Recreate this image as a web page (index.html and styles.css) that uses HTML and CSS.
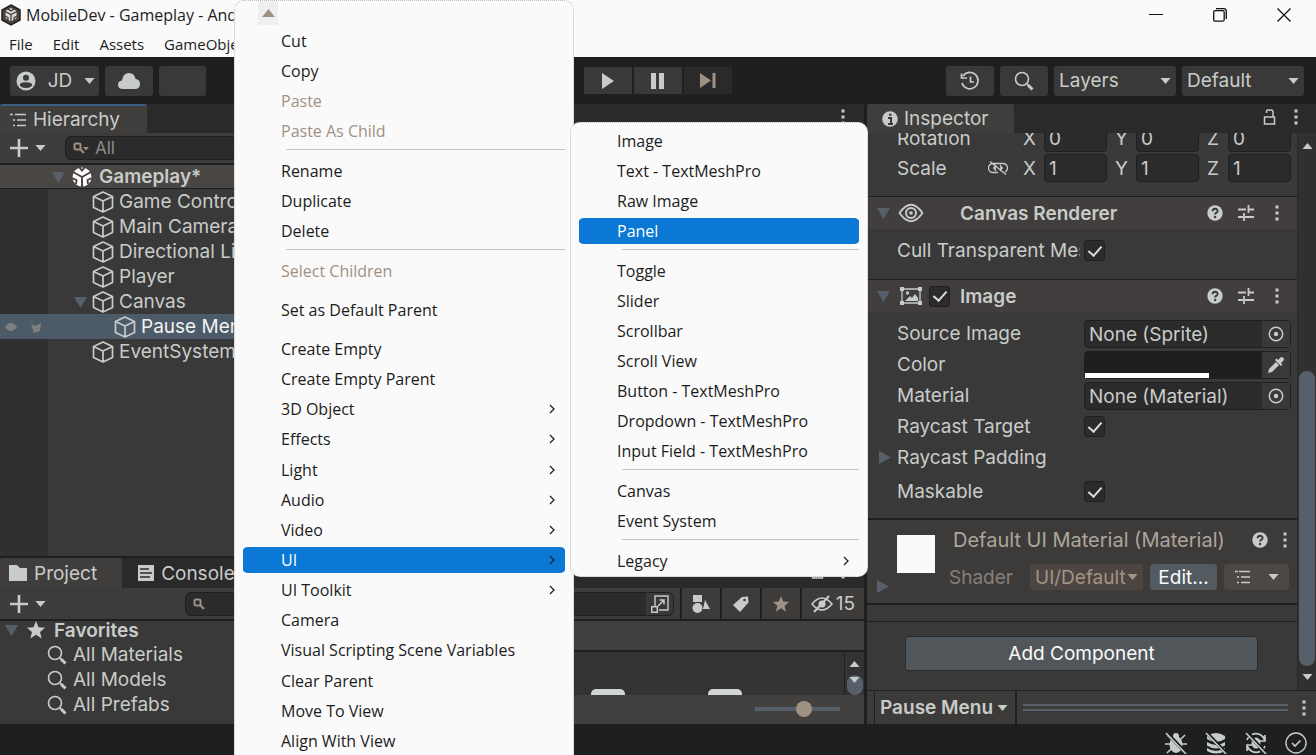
FILE: index.html
```html
<!DOCTYPE html>
<html lang="en">
<head>
<meta charset="utf-8">
<title>MobileDev - Gameplay</title>
<link rel="stylesheet" href="styles.css">
</head>
<body>
<svg class="sprite" aria-hidden="true">
  <symbol id="down" viewBox="0 0 10 6"><path d="M0 0h10L5 6z" fill="currentColor"/></symbol>
  <symbol id="up" viewBox="0 0 10 6"><path d="M0 6h10L5 0z" fill="currentColor"/></symbol>
  <symbol id="fold" viewBox="0 0 13 12"><path d="M0 1h13L6.500 12z" fill="#57606a"/></symbol>
  <symbol id="foldr" viewBox="0 0 12 13"><path d="M0 0l12 6.500L0 13z" fill="#57606a"/></symbol>
  <symbol id="chev" viewBox="0 0 8 10"><path d="M2 1l4 4-4 4" fill="none" stroke="#222" stroke-width="1.300"/></symbol>
  <symbol id="plus" viewBox="0 0 20 20"><path d="M10 1v18M1 10h18" stroke="currentColor" stroke-width="2.600" fill="none"/></symbol>
  <symbol id="dots" viewBox="0 0 4 16"><path d="M0.500 0.500h3v3h-3zM0.500 6.500h3v3h-3zM0.500 12.500h3v3h-3z" fill="currentColor"/></symbol>
  <symbol id="cube" viewBox="0 0 22 22"><path d="M11 1l9.500 4.500v11L11 21l-9.500-4.500v-11zM1.500 5.500L11 10l9.500-4.500M11 10v11" fill="none" stroke="currentColor" stroke-width="1.700" stroke-linejoin="round"/></symbol>
  <symbol id="mag" viewBox="0 0 20 20"><circle cx="8" cy="8" r="6.500" fill="none" stroke="currentColor" stroke-width="1.600"/><path d="M13 13l1.500 1.500" stroke="currentColor" stroke-width="1.600"/><path d="M14 14l4.500 4.500" stroke="currentColor" stroke-width="3"/></symbol>
  <symbol id="magsm" viewBox="0 0 16 12"><rect x="1.500" y="1.500" width="6" height="6" rx="1.500" fill="none" stroke="currentColor" stroke-width="2"/><path d="M7 7l4 4" stroke="currentColor" stroke-width="2.200"/></symbol>
  <symbol id="help" viewBox="0 0 16 16"><circle cx="8" cy="8" r="7.700" fill="currentColor"/><path d="M5.600 6.200c0-3.300 5-3.200 5-.3 0 1.800-2.500 1.700-2.500 3.700" fill="none" stroke="#393939" stroke-width="1.900"/><circle cx="8.100" cy="12" r="1.200" fill="#393939"/></symbol>
  <symbol id="preset" viewBox="0 0 16 16"><path d="M0 4.500h8M10 4.500h6M10.500 0v8M0 12h5M7 12h9M6 8v8" fill="none" stroke="currentColor" stroke-width="1.800"/></symbol>
  <symbol id="lock" viewBox="0 0 12 16"><path d="M1 8h10v7H1zM3 4V2.500Q3 1 4.500 1h3Q9.500 1 9.500 3v5" fill="none" stroke="currentColor" stroke-width="1.500"/></symbol>
  <symbol id="target" viewBox="0 0 16 16"><circle cx="8" cy="8" r="6.700" fill="none" stroke="currentColor" stroke-width="1.500"/><circle cx="8" cy="8" r="2.200" fill="currentColor"/></symbol>
  <symbol id="star" viewBox="0 0 20 20"><path d="M10 1l2.500 6.300 6.500.4-5 4.200 1.700 6.600L10 14.800l-5.700 3.700L6 11.900 1 7.700l6.500-.4z" fill="currentColor"/></symbol>
  <symbol id="list" viewBox="0 0 16 14"><path d="M1 1.500h3M5 1.500h11M3 7h2M7 7h9M3 12.500h2M7 12.500h9" stroke="currentColor" stroke-width="1.600"/></symbol>
</svg>

<div class="app">
  <header class="title">
    <svg class="logo" viewBox="0 0 20 22"><path d="M10 1l9 5v10l-9 5-9-5V6z" fill="#4a423c" stroke="#222" stroke-width="1.500"/><path d="M10 4l5.500 3v7L10 17.500 4.500 14V7z" fill="#ddd"/><path d="M10 10.500V18M10 10.500L4 7.500M10 10.500l6-3M7 5l3 2 3-2M4 12l3 1.500V16M16 12l-3 1.500V16" stroke="#38322e" stroke-width="1.200" fill="none"/></svg>
    <span class="name">MobileDev - Gameplay - Android</span>
    <div class="win">
      <button aria-label="Minimize"><svg viewBox="0 0 14 14"><path d="M0 6.500h14" stroke="#111"/></svg></button>
      <button aria-label="Restore"><svg viewBox="0 0 14 14"><rect x=".7" y="2.700" width="10.500" height="10.500" rx="1.500" fill="none" stroke="#111" stroke-width="1.300"/><path d="M3 .7h7.500q2.800 0 2.800 2.800V11" fill="none" stroke="#111" stroke-width="1.300"/></svg></button>
      <button aria-label="Close"><svg viewBox="0 0 14 14"><path d="M.5.500l13 13M13.500.500l-13 13" stroke="#111" stroke-width="1.300"/></svg></button>
    </div>
  </header>
  <nav class="menubar"><button>File</button><button>Edit</button><button>Assets</button><button>GameObject</button></nav>

  <div class="toolbar">
    <button class="tb user"><svg class="i20" viewBox="0 0 20 20"><circle cx="10" cy="10" r="9.500" fill="#c8ccc8"/><circle cx="10" cy="6.800" r="3" fill="#393939"/><path d="M3.700 14.500q0-3.300 6.300-3.300t6.300 3.300Q14 17 10 17t-6.300-2.500z" fill="#393939"/></svg><span>JD</span><svg class="tri"><use href="#down"/></svg></button>
    <button class="tb" aria-label="Cloud"><svg class="cloud" viewBox="0 0 22 16"><path d="M5 16q-5 0-5-4.500Q0 8 4 7.500 5 0 11 0q5.500 0 6.500 6 4.500.500 4.500 5 0 5-5 5z" fill="#c8ccc8"/></svg></button>
    <button class="tb blank" aria-label="Version control"></button>
    <div class="play">
      <button class="tb sq" aria-label="Play"><svg class="i16" viewBox="0 0 16 16"><path d="M2 0v16l12-8z" fill="#c8ccc8"/></svg></button>
      <button class="tb sq" aria-label="Pause"><svg class="i16" viewBox="0 0 16 16"><path d="M1 0h5v16H1zM9 0h5v16H9z" fill="#c8ccc8"/></svg></button>
      <button class="tb sq dim" aria-label="Step"><svg class="i16" viewBox="0 0 16 16"><path d="M0 0v15l11-7.500zM12.500 0h3v15h-3z" fill="#9f9184"/></svg></button>
    </div>
    <div class="right">
      <button class="tb" aria-label="History"><svg class="i20" viewBox="0 0 20 20"><path d="M3 5A8.200 8.200 0 1 1 2 12M1.500 2.500V7H7M10.500 5.500v5.500H14" fill="none" stroke="#c8ccc8" stroke-width="1.700"/></svg></button>
      <button class="tb" aria-label="Search"><svg class="i20"><use href="#mag"/></svg></button>
      <label class="sel"><select aria-label="Layers"><option>Layers</option></select><svg class="tri"><use href="#down"/></svg></label>
      <label class="sel"><select aria-label="Layout"><option>Default</option></select><svg class="tri"><use href="#down"/></svg></label>
    </div>
  </div>

  <div class="main">
    <div class="left">
      <div class="upper">
        <section class="hier">
          <div class="tabs"><button class="tab focus"><svg class="i16" viewBox="0 0 16 14"><path d="M0 1.500h3M5 1.500h11M3 7h2M7 7h9M3 12.500h2M7 12.500h9" stroke="#c8ccc8" stroke-width="1.700"/></svg>Hierarchy</button></div>
          <div class="bar"><button class="add" aria-label="Create"><svg class="i20"><use href="#plus"/></svg><svg class="tri"><use href="#down"/></svg></button>
            <label class="search"><svg class="ms" viewBox="0 0 16 12"><use href="#magsm" width="16" height="12"/><path d="M10 5h6l-3 3.500z" fill="currentColor"/></svg><input type="text" placeholder="All" aria-label="Search hierarchy"></label></div>
          <div class="scene"><svg class="fold"><use href="#fold"/></svg><svg class="i20" viewBox="0 0 20 20"><circle cx="10" cy="10" r="9.500" fill="#fff"/><path d="M10 10v10M10 10L1 5M10 10l9-5M7 0l3 3.500L13 0M0 11l4.500 2-.5 4M20 11l-4.500 2 .5 4" stroke="#454140" stroke-width="1.900" fill="none"/></svg>Gameplay*</div>
          <ul class="tree">
            <li><svg class="cube"><use href="#cube"/></svg>Game Controller</li>
            <li><svg class="cube"><use href="#cube"/></svg>Main Camera</li>
            <li><svg class="cube"><use href="#cube"/></svg>Directional Light</li>
            <li><svg class="cube"><use href="#cube"/></svg>Player</li>
            <li class="open"><svg class="fold"><use href="#fold"/></svg><svg class="cube"><use href="#cube"/></svg>Canvas</li>
            <li class="on"><span class="marks"><svg viewBox="0 0 40 14"><path d="M0 7q6-8 12 0-6 8-12 0zM26 4l4 2 6-3-1 8-6 2z" fill="#7d7f80"/></svg></span><svg class="cube"><use href="#cube"/></svg>Pause Menu</li>
            <li><svg class="cube"><use href="#cube"/></svg>EventSystem</li>
          </ul>
        </section>
        <section class="view"><div class="tabs"><button class="kebab" aria-label="More"><svg><use href="#dots"/></svg></button></div></section>
      </div>
      <section class="proj">
        <div class="tabs">
          <button class="tab"><svg class="i18" viewBox="0 0 18 16"><path d="M0 0h8l3 3h7v13H0z" fill="#c8ccc8"/></svg>Project</button>
          <button class="tab off"><svg class="i16" viewBox="0 0 16 16"><path d="M0 0h16v16H0z" fill="#c8ccc8"/><path d="M2 4h9M2 8h12M2 12h10" stroke="#2a2a2a" stroke-width="1.500"/></svg>Console</button>
          <span class="grow"></span>
          <button class="kebab" aria-label="Lock"><svg class="lock"><use href="#lock"/></svg></button>
          <button class="kebab" aria-label="More"><svg><use href="#dots"/></svg></button>
        </div>
        <div class="bar ptools"><button class="add" aria-label="Create asset"><svg class="i20"><use href="#plus"/></svg><svg class="tri"><use href="#down"/></svg></button>
          <label class="search psearch"><svg class="ms"><use href="#magsm"/></svg><input type="text" aria-label="Search project"><span class="ext"><svg class="i18" viewBox="0 0 18 18"><path d="M4 11V1h13v14H8" fill="none" stroke="#c8ccc8" stroke-width="1.400"/><path d="M.7 11.700h5.600v5.600H.7zM7 11l6-6M8.500 5H13v4.500" fill="none" stroke="#c8ccc8" stroke-width="1.500"/></svg></span></label>
          <button class="cell" aria-label="Filter by type"><svg class="i18" viewBox="0 0 18 18"><path d="M1 0h9v7H1zM13 5l5 9h-7z" fill="#c8ccc8"/><circle cx="5.500" cy="13" r="5" fill="#c8ccc8"/></svg></button>
          <button class="cell" aria-label="Filter by label"><svg class="i18" viewBox="0 0 18 18"><path d="M1 10L10 2l6-.500.500 6L8 17z" fill="#c8ccc8"/><circle cx="12.500" cy="5" r="1.300" fill="#393939"/></svg></button>
          <button class="cell beige" aria-label="Favorite"><svg class="i18"><use href="#star"/></svg></button>
          <button class="cell wide"><svg class="eye" viewBox="0 0 22 18"><path d="M1 9q10-12 20 0-10 12-20 0z" fill="none" stroke="#c8ccc8" stroke-width="1.600"/><circle cx="11" cy="9" r="3.500" fill="#c8ccc8"/><path d="M3 17L18 1" stroke="#c8ccc8" stroke-width="2"/></svg>15</button>
        </div>
        <div class="pbody">
          <ul class="favs">
            <li class="head"><svg class="fold"><use href="#fold"/></svg><svg class="i20"><use href="#star"/></svg>Favorites</li>
            <li><svg class="i20"><use href="#mag"/></svg>All Materials</li>
            <li><svg class="i20"><use href="#mag"/></svg>All Models</li>
            <li><svg class="i20"><use href="#mag"/></svg>All Prefabs</li>
          </ul>
          <div class="assets">
            <div class="crumb"></div>
            <div class="grid"><div class="thumbs"><i></i><i></i></div><div class="sb"><svg class="tri"><use href="#up"/></svg><span><svg class="tri"><use href="#down"/></svg></span></div></div>
            <div class="zoom"><input type="range" value="59" aria-label="Thumbnail size"></div>
          </div>
        </div>
      </section>
    </div>

    <section class="insp">
      <div class="tabs">
        <button class="tab"><svg class="i16" viewBox="0 0 16 16"><circle cx="8" cy="8" r="7.800" fill="#c8ccc8"/><path d="M6 7h3v6M6 13h5M7 3.700h2.500" stroke="#393939" stroke-width="2" fill="none"/></svg>Inspector</button>
        <span class="grow"></span>
        <button class="kebab" aria-label="Lock"><svg class="lock"><use href="#lock"/></svg></button>
        <button class="kebab last" aria-label="More"><svg><use href="#dots"/></svg></button>
      </div>
      <div class="iwrap">
        <div class="ibody">
          <div class="xform">
            <div class="vec"><span class="vl">Rotation</span><label>X<input type="text" value="0"></label><label>Y<input type="text" value="0"></label><label>Z<input type="text" value="0"></label></div>
            <div class="vec"><span class="vl">Scale<svg class="link" viewBox="0 0 20 14"><path d="M9 2.500H5a4.500 4.500 0 0 0 0 9h5M8 2.500h7a4.500 4.500 0 0 1 2 8.500M5 7h3M12 7h3M8 4q-3 3 0 6M12 4q3 3 0 6M2 0.500l16 13" fill="none" stroke="#c8ccc8" stroke-width="1.300"/></svg></span><label>X<input type="text" value="1"></label><label>Y<input type="text" value="1"></label><label>Z<input type="text" value="1"></label></div>
          </div>
          <div class="comp"><svg class="fold"><use href="#fold"/></svg><svg class="ci" viewBox="0 0 26 20"><path d="M1.500 10Q13-6.500 24.500 10 13 26.500 1.500 10z" fill="none" stroke="#c8ccc8" stroke-width="1.800"/><circle cx="13" cy="10" r="5" fill="none" stroke="#c8ccc8" stroke-width="2"/><circle cx="13" cy="10" r="1.800" fill="#c8ccc8"/></svg><h2>Canvas Renderer</h2>
            <button aria-label="Help"><svg class="i16"><use href="#help"/></svg></button><button aria-label="Presets"><svg class="i16"><use href="#preset"/></svg></button><button aria-label="More"><svg class="dots"><use href="#dots"/></svg></button></div>
          <div class="props one"><div class="row"><label for="cull">Cull Transparent Mesh</label><input type="checkbox" id="cull" checked></div></div>
          <div class="comp"><svg class="fold"><use href="#fold"/></svg><svg class="ci im" viewBox="0 0 22 18"><path d="M2 2h18v14H2z" fill="none" stroke="#c8ccc8" stroke-width="1.300"/><path d="M0 0h4v4H0zM18 0h4v4h-4zM0 14h4v4H0zM18 14h4v4h-4zM5 14l5-5 2 2 3-4 3 4v3z" fill="#c8ccc8"/><circle cx="7.500" cy="6" r="1.700" fill="#c8ccc8"/></svg><input type="checkbox" aria-label="Enable Image" checked><h2>Image</h2>
            <button aria-label="Help"><svg class="i16"><use href="#help"/></svg></button><button aria-label="Presets"><svg class="i16"><use href="#preset"/></svg></button><button aria-label="More"><svg class="dots"><use href="#dots"/></svg></button></div>
          <div class="props">
            <div class="row"><label for="src">Source Image</label><span class="obj"><input type="text" id="src" value="None (Sprite)"><button aria-label="Pick sprite"><svg class="i16"><use href="#target"/></svg></button></span></div>
            <div class="row"><span class="rl">Color</span><span class="obj color"><button class="swatch" aria-label="Color"><i></i></button><button aria-label="Pick color"><svg class="i18" viewBox="0 0 18 18"><path d="M1 17l1-4 7-7 3 3-7 7zM8 4l6 6 1.500-1.500L14 7l3-3q0-3-3-3l-3 3-1.500-1.500z" fill="#c8ccc8"/></svg></button></span></div>
            <div class="row"><label for="mat">Material</label><span class="obj"><input type="text" id="mat" value="None (Material)"><button aria-label="Pick material"><svg class="i16"><use href="#target"/></svg></button></span></div>
            <div class="row"><label for="rt">Raycast Target</label><input type="checkbox" id="rt" checked></div>
            <div class="row sub"><svg class="foldr"><use href="#foldr"/></svg><span class="rl">Raycast Padding</span></div>
            <div class="row gap"><label for="mk">Maskable</label><input type="checkbox" id="mk" checked></div>
          </div>
          <div class="matl">
            <div class="pv"><span></span><svg class="foldr"><use href="#foldr"/></svg></div>
            <div class="mi">
              <div class="mt"><span>Default UI Material (Material)</span><button aria-label="Help"><svg class="i16"><use href="#help"/></svg></button><button aria-label="More"><svg class="dots"><use href="#dots"/></svg></button></div>
              <div class="ms2"><label for="sh">Shader</label><span class="sel shader"><select id="sh" disabled><option>UI/Default</option></select><svg class="tri"><use href="#down"/></svg></span><button class="edit">Edit...</button><button class="lst" aria-label="Shader options"><svg class="i16"><use href="#list"/></svg><svg class="tri"><use href="#down"/></svg></button></div>
            </div>
          </div>
          <div class="strip"></div>
          <div class="addc"><button>Add Component</button></div>
        </div>
        <div class="scroll"><svg class="tri"><use href="#up"/></svg><i></i><svg class="tri"><use href="#down"/></svg></div>
      </div>
      <div class="foot"><button class="pm">Pause Menu<svg class="tri"><use href="#down"/></svg></button><span class="lines"></span><button class="kebab last" aria-label="More"><svg><use href="#dots"/></svg></button></div>
    </section>
  </div>

  <footer class="status">
    <svg viewBox="0 0 22 22"><path d="M2 3l4 4M20 3l-4 4M0 12h22M2 21l4-4M20 21l-4-4" stroke="#c8ccc8" stroke-width="1.600"/><ellipse cx="11" cy="12.500" rx="6.500" ry="8.500" fill="#c8ccc8"/><circle cx="11" cy="4" r="3" fill="#c8ccc8"/><path d="M1 0l21 22" stroke="#1e1f21" stroke-width="3.500"/><path d="M1 1l20 21" stroke="#c8ccc8" stroke-width="1.600"/></svg>
    <svg viewBox="0 0 22 22"><path d="M2 4q9-6 18 0v3q-9 6-18 0zM2 10q9 6 18 0v3.500q-9 6-18 0zM2 16q9 6 18 0v3q-9 5-18 0z" fill="#c8ccc8"/><path d="M1 0l21 22" stroke="#1e1f21" stroke-width="3.500"/><path d="M1 1l20 21" stroke="#c8ccc8" stroke-width="1.600"/></svg>
    <svg viewBox="0 0 22 22"><path d="M7 2.500a9.500 9.500 0 0 1 13 6M15 19.500a9.500 9.500 0 0 1-13-6M2 8a9 9 0 0 1 3-4M20 14a9 9 0 0 1-3 4M20 3v6h-5M2 19v-6h5" fill="none" stroke="#c8ccc8" stroke-width="1.700"/><ellipse cx="11" cy="11" rx="4.500" ry="5.500" fill="#c8ccc8"/><path d="M1 0l21 22" stroke="#1e1f21" stroke-width="3.500"/><path d="M1 1l20 21" stroke="#c8ccc8" stroke-width="1.600"/></svg>
    <svg viewBox="0 0 22 22"><circle cx="11" cy="11" r="10" fill="none" stroke="#c8ccc8" stroke-width="1.400"/><path d="M7 11l3 3 5.500-5.500" fill="none" stroke="#c8ccc8" stroke-width="1.700"/></svg>
  </footer>
</div>

<div class="menu ctx" role="menu">
  <div class="scrollup"><span><svg class="tri"><use href="#up"/></svg></span></div>
  <button role="menuitem">Cut</button>
  <button role="menuitem">Copy</button>
  <button role="menuitem" disabled>Paste</button>
  <button role="menuitem" disabled>Paste As Child</button>
  <hr>
  <button role="menuitem">Rename</button>
  <button role="menuitem">Duplicate</button>
  <button role="menuitem">Delete</button>
  <hr>
  <button role="menuitem" disabled>Select Children</button>
  <hr class="clear">
  <button role="menuitem">Set as Default Parent</button>
  <hr class="clear">
  <div class="rest">
    <button role="menuitem">Create Empty</button>
    <button role="menuitem">Create Empty Parent</button>
    <button role="menuitem">3D Object<svg><use href="#chev"/></svg></button>
    <button role="menuitem">Effects<svg><use href="#chev"/></svg></button>
    <button role="menuitem">Light<svg><use href="#chev"/></svg></button>
    <button role="menuitem">Audio<svg><use href="#chev"/></svg></button>
    <button role="menuitem">Video<svg><use href="#chev"/></svg></button>
    <button role="menuitem" class="hot">UI<svg><use href="#chev"/></svg></button>
    <button role="menuitem">UI Toolkit<svg><use href="#chev"/></svg></button>
    <button role="menuitem">Camera</button>
    <button role="menuitem">Visual Scripting Scene Variables</button>
    <button role="menuitem">Clear Parent</button>
    <button role="menuitem">Move To View</button>
    <button role="menuitem">Align With View</button>
  </div>
</div>

<div class="menu subm" role="menu">
  <button role="menuitem">Image</button>
  <button role="menuitem">Text - TextMeshPro</button>
  <button role="menuitem">Raw Image</button>
  <button role="menuitem" class="hot">Panel</button>
  <hr>
  <button role="menuitem">Toggle</button>
  <button role="menuitem">Slider</button>
  <button role="menuitem">Scrollbar</button>
  <button role="menuitem">Scroll View</button>
  <button role="menuitem">Button - TextMeshPro</button>
  <button role="menuitem">Dropdown - TextMeshPro</button>
  <button role="menuitem">Input Field - TextMeshPro</button>
  <hr>
  <button role="menuitem">Canvas</button>
  <button role="menuitem">Event System</button>
  <hr>
  <button role="menuitem">Legacy<svg><use href="#chev"/></svg></button>
</div>
</body>
</html>
```
FILE: styles.css
```css
* { box-sizing: border-box; }
body { margin: 0; height: 100vh; overflow: hidden; background: #1e1f21; color: #c8ccc8; font-family: Inter, "Liberation Sans", sans-serif; font-size: 19px; }
button, input, select { font: inherit; color: inherit; margin: 0; padding: 0; border: 0; background: none; }
button { display: flex; align-items: center; justify-content: center; white-space: nowrap; }
input { min-width: 0; outline: 0; }
ul { list-style: none; margin: 0; padding: 0; }
svg { flex: none; display: block; }
.sprite { position: absolute; width: 0; height: 0; }
.i16 { width: 16px; height: 16px; }
.i18 { width: 18px; height: 18px; }
.i20 { width: 20px; height: 20px; }
.tri { width: 11px; height: 6px; }
.grow { flex: 1; }
.app { height: 100%; display: flex; flex-direction: column; }

/* window frame */
.title, .menubar { background: #fafafa; color: #1c1c1c; font-family: "Open Sans", "Noto Sans", sans-serif; display: flex; align-items: center; }
.title { height: 30px; font-size: 16px; padding-left: 1px; }
.logo { width: 20px; height: 22px; }
.name { flex: 1; margin-left: 5px; }
.win { display: flex; }
.win button { width: 64px; height: 28px; }
.win svg { width: 14px; height: 14px; }
.menubar { height: 27px; font-size: 15px; gap: 20px; padding-left: 9px; }

/* main toolbar */
.toolbar { height: 47px; display: flex; align-items: center; gap: 6px; padding: 0 12px 0 10px; }
.tb { height: 30px; width: 48px; background: #393939; border-radius: 3px; }
.user { width: 89px; gap: 12px; padding-left: 2px; }
.cloud { width: 22px; height: 16px; }
.blank { width: 47px; }
.play { display: flex; gap: 2px; margin-left: auto; }
.play .tb { border-radius: 0; height: 27px; }
.play .dim { background: #2a2a2a; }
.right { display: flex; gap: 6px; margin-left: 208px; }
.sel { display: flex; align-items: center; position: relative; width: 122px; height: 30px; background: #393939; border-radius: 3px; }
.sel select { appearance: none; width: 100%; height: 100%; padding-left: 5px; opacity: 1; }
.sel .tri { position: absolute; right: 5px; pointer-events: none; }

/* docked panels */
.main { flex: 1; min-height: 0; display: grid; grid-template-columns: minmax(0, 866fr) minmax(0, 450fr); }
.left { display: flex; flex-direction: column; min-height: 0; border-right: 2px solid #1e1f21; }
.upper { flex: 1; display: flex; gap: 2px; min-height: 0; }
.hier { flex: 0 0 300px; background: #393939; display: flex; flex-direction: column; }
.view { flex: 1; background: #393939; }
.tabs { height: 29px; background: #2a2a2a; display: flex; flex: none; }
.view .tabs { justify-content: flex-end; }
.tab { height: 29px; background: #403e3d; padding: 0 27px 0 10px; gap: 7px; border-radius: 3px 3px 0 0; }
.tab.focus { border-top: 2px solid #3c5f85; }
.tab.off { background: #2a2a2a; padding-left: 16px; }
.kebab { width: 26px; height: 26px; }
.view .kebab { margin-right: 8px; }
.kebab svg { width: 4px; height: 16px; }
.kebab .lock { width: 13px; height: 16px; }
.bar { height: 32px; background: #3d3c3b; border-bottom: 2px solid #1e1f21; display: flex; align-items: center; padding-left: 8px; }
.add { gap: 6px; width: 38px; }
.search { flex: 1; height: 24px; margin-left: 19px; background: #2b2b2b; border: 1px solid #1e1f21; border-radius: 6px; display: flex; align-items: center; padding-left: 7px; gap: 6px; color: #9f9184; }
.search input { flex: 1; font-size: 17px; }
.search input::placeholder { color: #8b8b88; opacity: 1; }
.ms { width: 16px; height: 12px; }
.scene { height: 24px; background: #4a4644; font-weight: 600; display: flex; align-items: center; gap: 7px; padding-left: 52px; border-bottom: 1px solid #1e1f21; }
.fold { width: 13px; height: 12px; }
.foldr { width: 12px; height: 13px; }
.tree { flex: 1; background: linear-gradient(90deg, #303030 48px, #393939 48px); }
.tree li { height: 25px; display: flex; align-items: center; gap: 5px; padding-left: 92px; white-space: nowrap; position: relative; overflow: hidden; }
.tree .open { padding-left: 74px; }
.tree .on { background: #4d5b69; color: #f2f2f2; padding-left: 114px; }
.tree .on .cube { color: #c8ccc8; }
.marks { position: absolute; left: 5px; width: 40px; }
.cube { width: 22px; height: 22px; }

.proj { height: 168px; border-top: 2px solid #1e1f21; background: #393939; display: flex; flex-direction: column; }
.proj .tabs { height: 30px; padding-right: 8px; }
.proj .tab { height: 30px; }
.proj .tab:first-child { padding: 0 25px 0 9px; gap: 7px; }
.ptools { height: 33px; flex: none; }
.psearch { margin: 0 6px 0 139px; padding-right: 0; overflow: hidden; }
.ext { width: 27px; height: 24px; background: #393939; display: flex; align-items: center; justify-content: center; }
.cell { width: 40px; height: 31px; border-left: 2px solid #1e1f21; }
.cell.wide { width: 64px; gap: 3px; }
.beige { color: #9f9184; }
.eye { width: 22px; height: 18px; }
.pbody { flex: 1; display: flex; min-height: 0; }
.favs { flex: 0 0 300px; overflow: hidden; }
.favs li { height: 25px; display: flex; align-items: center; gap: 6px; padding-left: 47px; }
.favs .head { font-weight: 600; padding: 0 0 3px 5px; gap: 8px; height: 21px; }
.assets { flex: 1; border-left: 2px solid #1e1f21; display: flex; flex-direction: column; }
.crumb { height: 32px; background: #434040; border-bottom: 2px solid #1e1f21; }
.grid { flex: 1; background: #333; display: flex; }
.thumbs { flex: 1; display: flex; justify-content: flex-end; align-items: flex-end; gap: 83px; padding-right: 102px; }
.thumbs i { width: 34px; height: 6px; background: #d2d6d2; border-radius: 5px 5px 0 0; }
.sb { width: 20px; padding-top: 9px; border-left: 1px solid #1e1f21; display: flex; flex-direction: column; align-items: center; gap: 8px; }
.sb span { width: 16px; height: 20px; background: #57606a; border-radius: 8px; display: flex; justify-content: center; padding-top: 2px; }
.zoom { height: 31px; background: #434040; display: flex; align-items: center; justify-content: flex-end; padding-right: 24px; }
.zoom input { appearance: none; width: 85px; height: 4px; background: #57606a; }
.zoom input::-webkit-slider-thumb { appearance: none; width: 16px; height: 16px; border-radius: 50%; background: #9f9184; }

/* inspector */
.insp { background: #393939; display: flex; flex-direction: column; min-height: 0; margin-left: 1px; }
.insp .tab { padding: 0 25px 0 15px; gap: 6px; }
.insp .tabs { padding-right: 8px; gap: 2px; }
.kebab.last { width: 24px; }
.iwrap { flex: 1; min-height: 0; display: flex; overflow: hidden; }
.ibody { flex: 1; min-width: 0; margin-top: -10px; }
.xform { height: 73px; padding: 0 6px 0 30px; }
.vec { height: 30px; display: flex; align-items: center; gap: 8px; }
.vl { flex: 0 0 118px; display: flex; align-items: center; justify-content: space-between; padding-right: 7px; }
.link { width: 20px; height: 14px; }
.vec label { flex: 1; display: flex; align-items: center; justify-content: space-between; }
.vec input { width: 63px; height: 28px; background: #2b2b2b; border: 1px solid #1e1f21; border-radius: 4px; padding-left: 4px; }
.comp { height: 33px; background: #413e3d; border-top: 1px solid #1e1f21; display: flex; align-items: center; padding: 0 10px; gap: 6px; }
.comp h2 { flex: 1; font-size: 19px; font-weight: 600; margin: 0; }
.comp button { width: 20px; margin-left: 5px; }
.dots { width: 4px; height: 16px; }
.ci { width: 26px; height: 20px; margin: 0 30px 0 2px; }
.ci.im { width: 22px; height: 18px; margin: 0 1px 0 4px; }
.comp input { margin-right: 4px; }
input[type=checkbox] { appearance: none; flex: none; width: 21px; height: 21px; background: #2b2b2b; border: 1px solid #1e1f21; border-radius: 3px; display: grid; place-items: center; }
input[type=checkbox]:checked::after { content: ""; width: 6px; height: 11px; border: solid #dcdfdc; border-width: 0 2px 2px 0; transform: rotate(42deg); margin-bottom: 3px; }
.props { padding: 6px 6px 11px 30px; }
.props.one { height: 50px; }
.row { height: 31px; display: flex; align-items: center; }
.row label, .rl { flex: 0 0 183px; margin-right: 4px; overflow: hidden; white-space: nowrap; }
.row.sub .foldr { margin-left: -18px; margin-right: 6px; }
.row.gap { margin-top: 3px; }
.obj { flex: 1; min-width: 0; height: 28px; background: #2b2b2b; border: 1px solid #1e1f21; border-radius: 4px; display: flex; }
.obj input { flex: 1; padding: 2px 0 0 4px; }
.obj > button { width: 28px; background: #393939; }
.obj .swatch { flex: 1; background: #1e1f21; justify-content: flex-start; align-items: flex-end; }
.swatch i { width: 70%; height: 5px; background: #fff; }
.matl { height: 87px; border-top: 2px solid #1e1f21; border-bottom: 2px solid #1e1f21; background: #3d3b3a; display: flex; padding: 0 3px 0 10px; }
.pv { flex: 0 0 59px; padding-top: 15px; display: flex; flex-direction: column; gap: 7px; }
.pv span { width: 38px; height: 38px; background: #fafafa; margin-left: 20px; }
.mi { flex: 1; min-width: 0; padding-top: 3px; }
.mt { display: flex; align-items: center; height: 33px; padding-left: 17px; color: #ada59b; font-size: 20px; }
.mt span { flex: 1; white-space: nowrap; }
.mt button { color: #c8ccc8; width: 18px; margin-left: 7px; }
.ms2 { display: flex; align-items: center; height: 42px; gap: 7px; padding: 0 5px 0 13px; color: #85807a; }
.ms2 label { flex: 1; }
.shader { width: 113px; height: 26px; background: #4c4541; color: #a39587; }
.edit { width: 67px; height: 26px; background: #535a60; border-radius: 4px; color: #fafafa; }
.lst { width: 65px; height: 26px; background: #4c4845; border-radius: 4px; gap: 18px; color: #c8ccc8; }
.strip { height: 17px; border-bottom: 1px solid #1e1f21; }
.addc { height: 69px; padding: 14px 39px 0 38px; }
.addc button { width: 100%; height: 35px; background: #51565a; border: 1px solid #2a2a2a; border-radius: 3px; color: #fafafa; }
.scroll { width: 19px; background: #303030; border-left: 1px solid #2a2a2a; display: flex; flex-direction: column; align-items: center; padding: 10px 0; gap: 8px; }
.scroll i { width: 16px; height: 295px; margin-top: auto; background: #57606a; border-radius: 8px; }
.foot { height: 34px; border-top: 1px solid #1e1f21; background: #3d3b3a; display: flex; align-items: center; padding-left: 7px; }
.pm { height: 100%; font-weight: 600; gap: 4px; padding: 0 7px 0 5px; border: solid #1e1f21; border-width: 0 2px 0 1px; }
.lines { flex: 1; height: 7px; border: solid #57606a; border-width: 2px 0; margin: 0 4px 0 6px; }
.status { height: 31px; display: flex; align-items: center; justify-content: flex-end; gap: 18px; padding: 6px 9px 0; }
.status svg { width: 22px; height: 22px; }

/* pop-up menus */
.menu { position: absolute; z-index: 5; background: #fafafa; color: #1c1c1c; border: 1px dotted #bbb; border-radius: 10px; padding: 0 8px; font-family: "Open Sans", "Noto Sans", sans-serif; font-size: 16px; display: flex; flex-direction: column; }
.menu button { height: 30px; flex: none; width: 100%; justify-content: space-between; padding: 0 9px 0 38px; border: solid transparent; border-width: 2px 0; border-radius: 5px; background-clip: padding-box; }
.menu button svg { width: 8px; height: 10px; }
.menu button:disabled { color: #9f9184; }
.menu .hot { background-color: #0a78d4; color: #fff; }
.menu hr { width: calc(100% - 43px); height: 1px; margin: 3px 0 6px 43px; border: 0; background: #c4c4c4; flex: none; }
.menu .clear { background: none; margin-bottom: 5px; }
.ctx { left: 234px; top: 0; bottom: -2px; width: 340px; border-radius: 10px 10px 0 0; }
.scrollup { height: 25px; flex: none; padding-left: 15px; color: #9f9184; }
.scrollup span { width: 20px; height: 24px; display: grid; place-items: center; background: #efefef; }
.scrollup .tri { width: 13px; height: 8px; }
.rest { flex: 1; min-height: 0; display: flex; flex-direction: column; }
.rest button { flex: 1; min-height: 0; height: auto; }
.subm { left: 570px; top: 122px; width: 298px; padding-top: 3px; }
```
